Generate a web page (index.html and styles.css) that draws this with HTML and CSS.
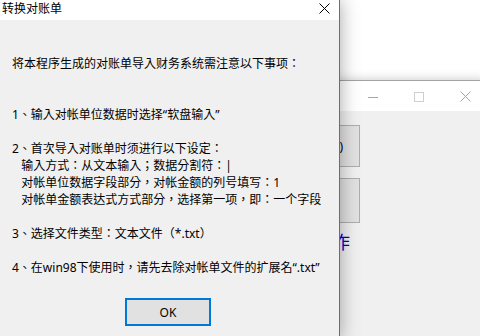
FILE: index.html
```html
<!DOCTYPE html>
<html lang="zh-CN">
<head>
    <meta charset="UTF-8">
    <title>转换对账单</title>
    <link rel="stylesheet" href="styles.css">
</head>
<body>
    <div class="desk">
        <!-- 后面的主窗口 -->
        <div class="mainwin">
            <div class="mainwin-bar">
                <span class="cap">
                    <svg width="10" height="10" viewBox="0 0 10 10"><path d="M0 5.5H10" stroke="#a6a6a6" stroke-width="1"/></svg>
                </span>
                <span class="cap">
                    <svg width="10" height="10" viewBox="0 0 10 10"><rect x="0.5" y="0.5" width="9" height="9" fill="none" stroke="#cfcfcf" stroke-width="1"/></svg>
                </span>
                <span class="cap">
                    <svg width="11" height="11" viewBox="0 0 11 11"><path d="M0.5 0.5L10.5 10.5M10.5 0.5L0.5 10.5" stroke="#a6a6a6" stroke-width="1"/></svg>
                </span>
            </div>
            <div class="mainwin-body">
                <div class="col">
                    <div class="btn btn-a">(D)</div>
                    <div class="btn btn-b"></div>
                    <div class="link">作</div>
                </div>
            </div>
        </div>

        <!-- 提示对话框 -->
        <div class="dialog">
            <div class="dialog-bar">
                <span class="dialog-title">转换对账单</span>
                <span class="dialog-close">
                    <svg width="11" height="11" viewBox="0 0 11 11"><path d="M0.5 0.5L10.5 10.5M10.5 0.5L0.5 10.5" stroke="#000" stroke-width="1"/></svg>
                </span>
            </div>
            <div class="dialog-body">
                <div class="msg" lang="zh-TW">将本程序生成的对账单导入财务系统需注意以下事项：


1、输入对帐单位数据时选择“软盘输入”

2、首次导入对账单时须进行以下设定：
   输入方式：从文本输入；数据分割符：|
   对帐单位数据字段部分，对帐金额的列号填写：1
   对帐单金额表达式方式部分，选择第一项，即：一个字段

3、选择文件类型：文本文件（*.txt）

4、在win98下使用时，请先去除对帐单文件的扩展名“.txt”</div>
                <div class="actions">
                    <button class="ok" type="button">OK</button>
                </div>
            </div>
        </div>
    </div>
</body>
</html>
```

FILE: styles.css
```css
html, body { margin: 0; padding: 0; }
body { background: #fff; font-family: "Noto Sans", "Noto Sans CJK SC", sans-serif; font-size: 12px; color: #000; }

.desk { position: relative; width: 480px; height: 336px; overflow: hidden; background: #fff; }

/* 主窗口 */
.mainwin { position: absolute; left: 150px; top: 80px; width: 338px; height: 300px; border-top: 1px solid #a3a3a3; background: #f0f0f0; box-shadow: 0 0 10px rgba(0, 0, 0, 0.22); display: flex; flex-direction: column; }
.mainwin-bar { height: 30px; background: #fff; display: flex; justify-content: flex-end; }
.mainwin-bar .cap { width: 46px; display: flex; align-items: center; justify-content: center; padding-top: 1px; }
.mainwin-body { flex: 1; padding: 14px 0 0 120px; }
.mainwin .col { width: 90px; display: flex; flex-direction: column; }
.mainwin .btn { box-sizing: border-box; border: 1px solid #adadad; background: #e1e1e1; display: flex; align-items: center; justify-content: flex-end; padding-right: 16px; font-size: 12px; }
.mainwin .btn-a { height: 42px; margin-bottom: 11px; }
.mainwin .btn-b { height: 45px; }
.mainwin .link { width: 80px; margin-top: 8px; text-align: right; font-family: "Noto Sans CJK SC", sans-serif; font-size: 18px; line-height: 20px; color: #0000d0; }

/* 对话框 */
.dialog { position: absolute; left: 0; top: 0; width: 339px; height: 340px; border-right: 1px solid #1883d7; background: #f0f0f0; box-shadow: 0 0 18px rgba(0, 0, 0, 0.35); display: flex; flex-direction: column; }
.dialog-bar { height: 20px; background: #fff; display: flex; justify-content: space-between; }
.dialog-title { padding-left: 2px; line-height: 17px; font-size: 12px; }
.dialog-close { padding: 3px 9px 0 0; }
.dialog-close svg { display: block; }
.dialog-body { flex: 1; padding: 35px 0 0 12px; }
.msg { white-space: pre; line-height: 17px; font-size: 12px; font-family: "Noto Sans", "Noto Sans CJK TC", sans-serif; }
.actions { padding: 22px 0 0 113px; }
.ok { box-sizing: border-box; width: 86px; height: 28px; border: 2px solid #0078d7; background: #e1e1e1; font-family: inherit; font-size: 12px; color: #000; padding: 0; }
```
